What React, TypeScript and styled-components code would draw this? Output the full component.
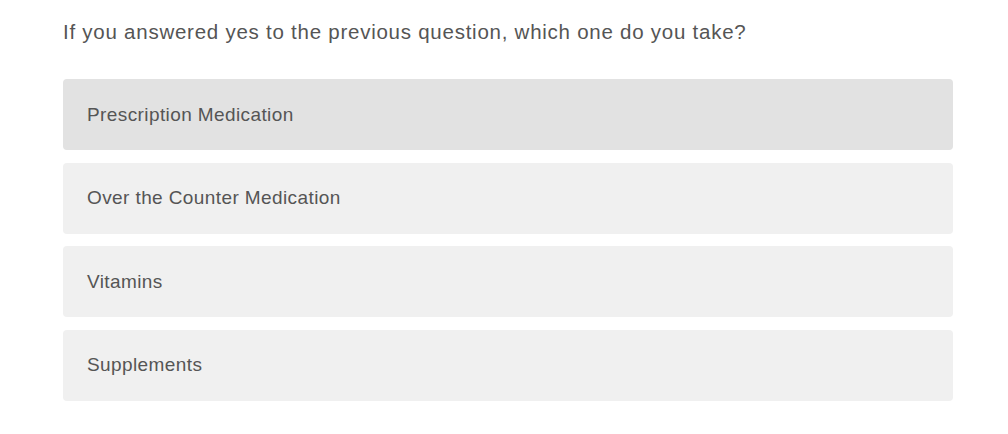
import React from "react"
import styled, { createGlobalStyle } from "styled-components"

const GlobalStyle = createGlobalStyle`
  body {
    margin: 0;
    background: #fff;
    font-family: "Liberation Sans", Arial, sans-serif;
  }
`

const Page = styled.div`
  padding: 20px 55px 0 63px;
  width: 890px;
`

const Question = styled.h2`
  margin: 0 0 35px;
  font-size: 20.5px;
  line-height: 24px;
  letter-spacing: 0.75px;
  font-weight: normal;
  color: #555;
`

const Options = styled.div`
  display: flex;
  flex-direction: column;
  gap: 12.5px;
`

const Option = styled.div<{ $selected?: boolean }>`
  height: 71px;
  display: flex;
  align-items: center;
  padding: 0 24px;
  border-radius: 4px;
  background: ${(p) => (p.$selected ? "#e2e2e2" : "#f0f0f0")};
  color: #555;
  font-size: 19px;
  letter-spacing: 0.4px;
  cursor: pointer;
`

const choices = [
  "Prescription Medication",
  "Over the Counter Medication",
  "Vitamins",
  "Supplements",
]

export default function App() {
  return (
    <>
      <GlobalStyle />
      <Page>
        <Question>If you answered yes to the previous question, which one do you take?</Question>
        <Options>
          {choices.map((c, i) => (
            <Option key={c} $selected={i === 0}>
              {c}
            </Option>
          ))}
        </Options>
      </Page>
    </>
  )
}
